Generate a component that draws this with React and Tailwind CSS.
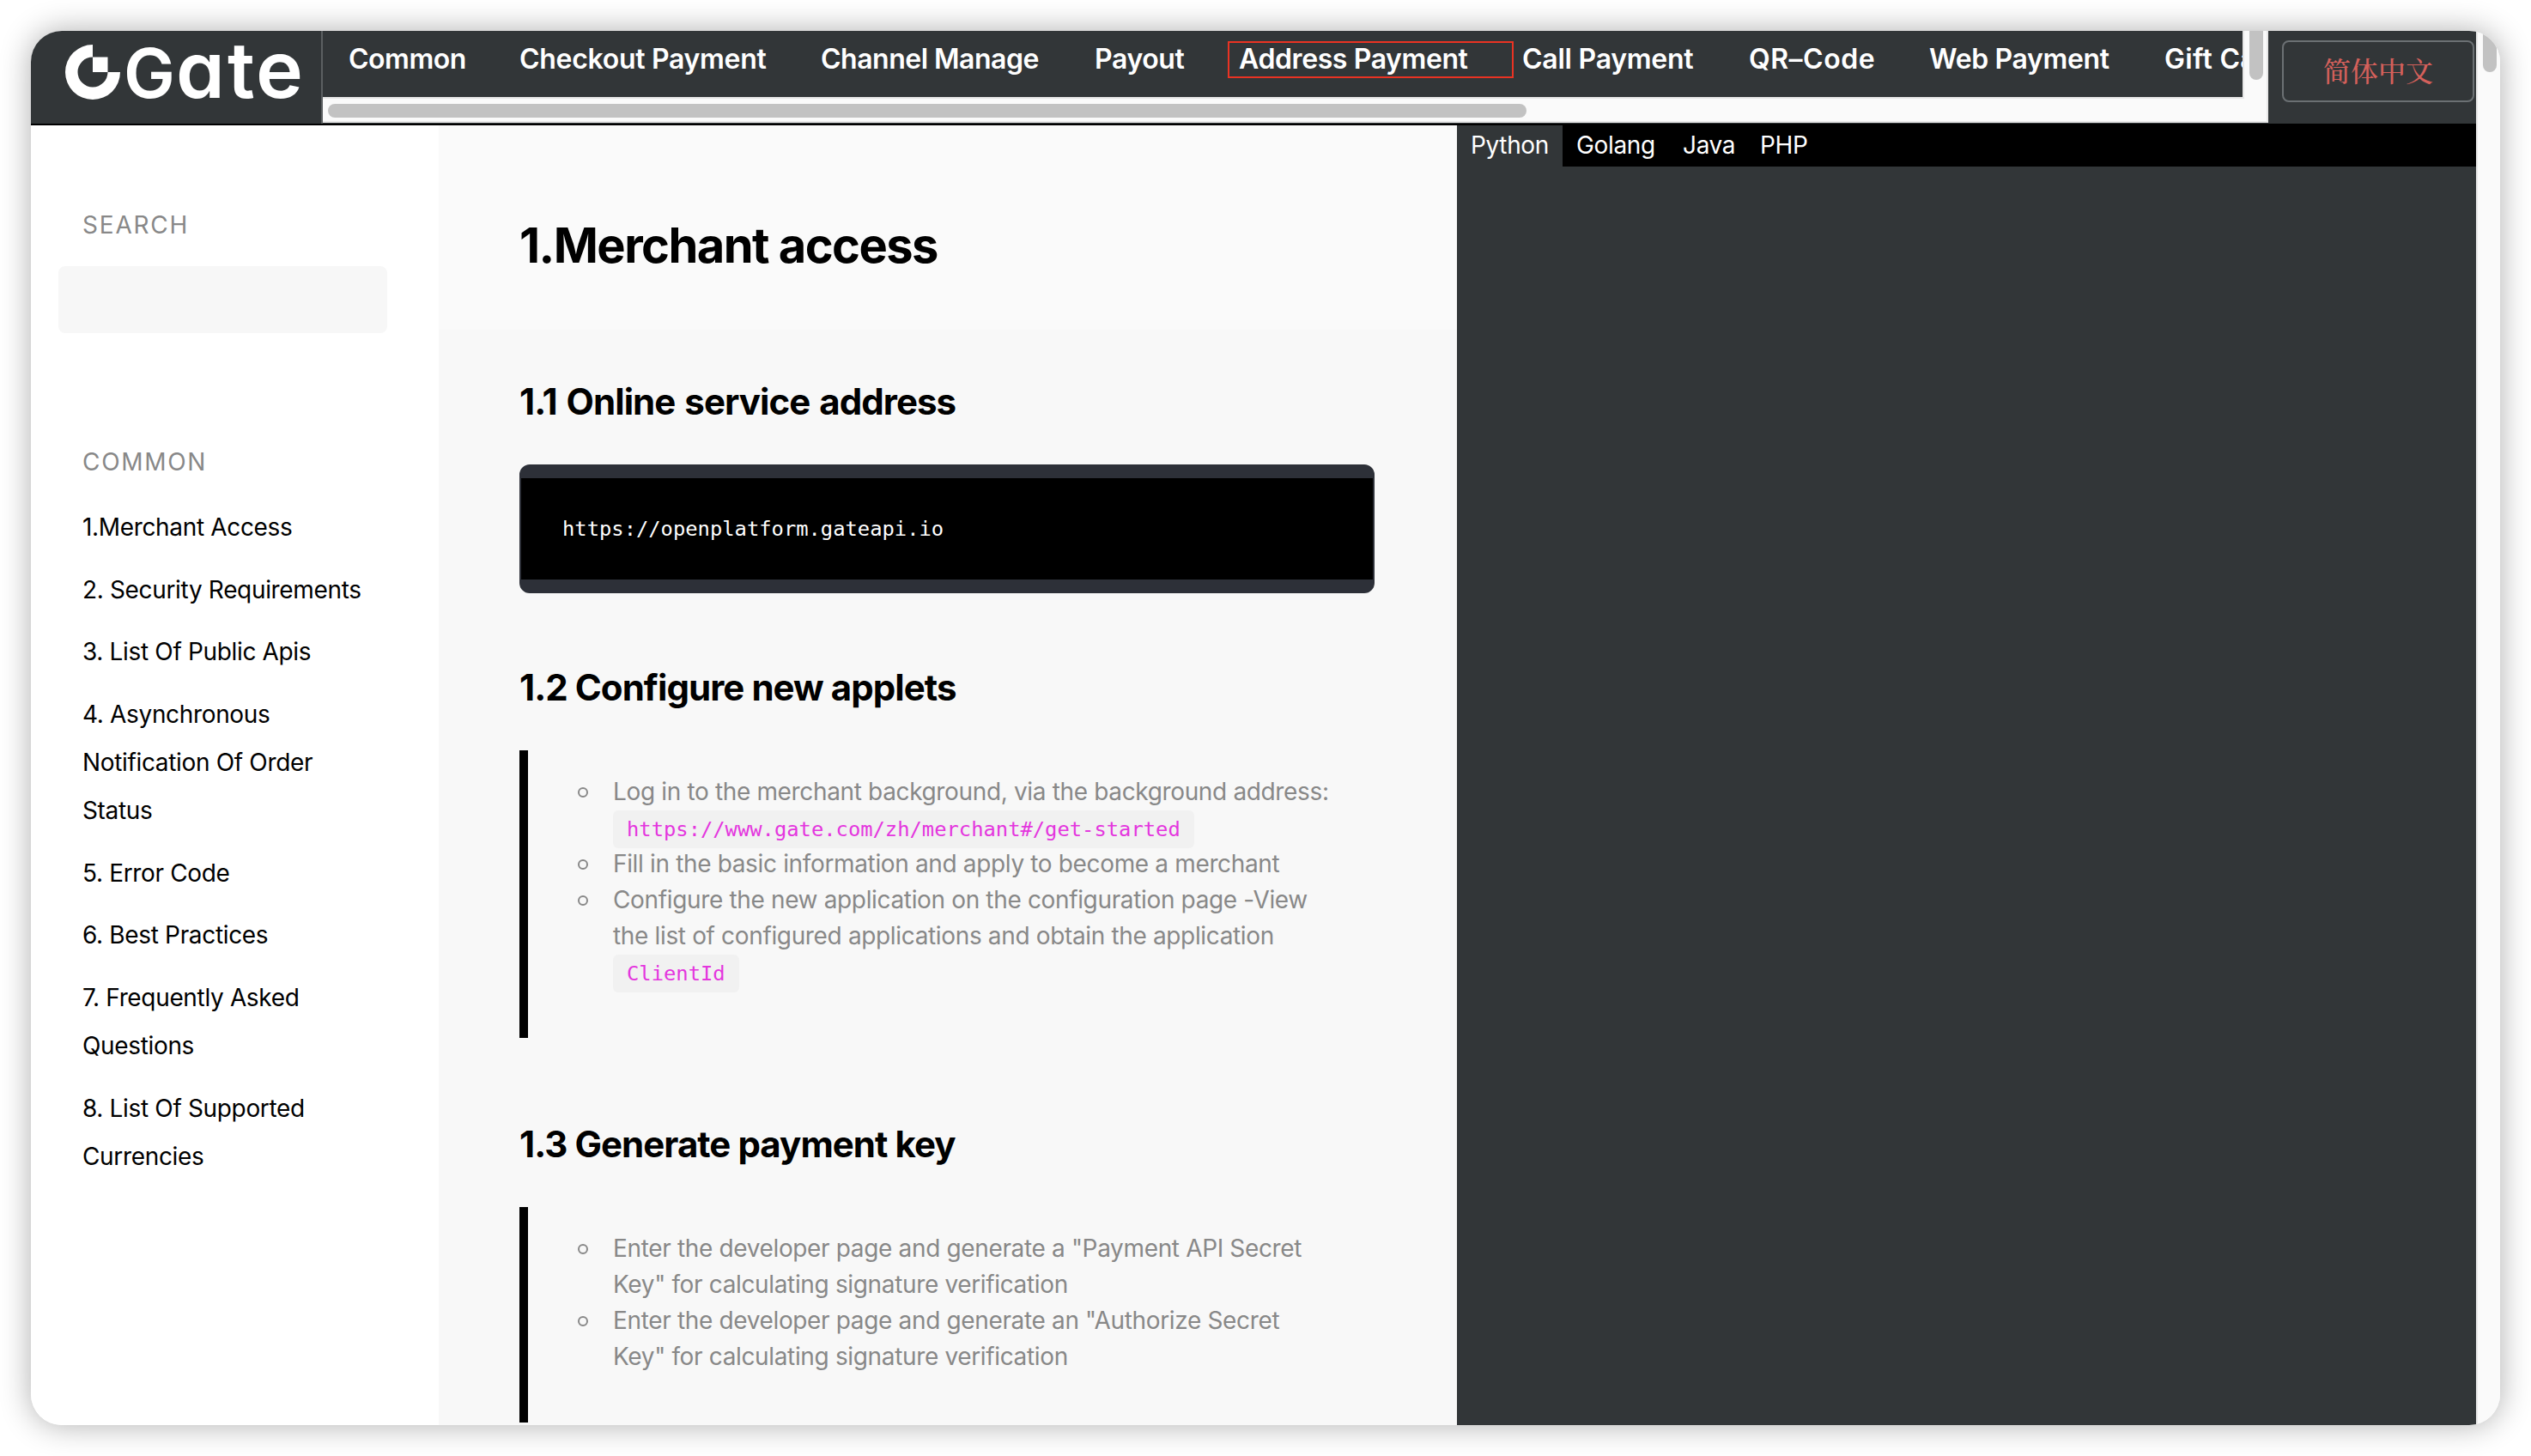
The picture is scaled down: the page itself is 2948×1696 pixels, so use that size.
import React, { useState } from "react";
import clsx from "clsx";

const NAV_ITEMS = [
  { label: "Common", className: "w-[199px] tracking-[-0.5px]" },
  { label: "Checkout Payment", className: "w-[351px] tracking-[-0.3px]" },
  { label: "Channel Manage", className: "w-[319px] tracking-[-0.5px]" },
  { label: "Payout", className: "w-[168px] tracking-[-0.4px]" },
  { label: "Address Payment", className: "w-[330px] tracking-[-0.4px]", marked: true },
  { label: "Call Payment", className: "w-[264px] tracking-[-0.25px]" },
  { label: "QR–Code", className: "w-[210px] tracking-[0.5px]" },
  { label: "Web Payment", className: "w-[274px] tracking-[-0.35px]" },
  { label: "Gift Card", className: "w-[200px] tracking-[0.3px]" },
];

const TOC = [
  "1.Merchant Access",
  "2. Security Requirements",
  "3. List Of Public Apis",
  "4. Asynchronous Notification Of Order Status",
  "5. Error Code",
  "6. Best Practices",
  "7. Frequently Asked Questions",
  "8. List Of Supported Currencies",
];

const LANGUAGES = [
  { label: "Python", width: "w-[123px]" },
  { label: "Golang", width: "w-[124px]" },
  { label: "Java", width: "w-[90px]" },
  { label: "PHP", width: "w-[87px]" },
];

const Logo = () => (
  <div className="w-[340px] shrink-0 border-r-2 border-[#5b5f61] pl-10 pt-4 flex items-start">
    <svg viewBox="0 0 64 64" className="w-16 h-16 shrink-0" fill="#fff">
      <path d="M32 0A32 32 0 1 0 64 32H49.5A17.5 17.5 0 1 1 32 14.5Z" />
      <path d="M32 14.5H49.5V32H32Z" />
    </svg>
    <div className="-mt-1 flex items-baseline h-16 leading-[64px] text-white font-semibold pl-1">
      <span className="text-[80px] w-[61px]">G</span>
      <span className="text-[91px] w-[60px] [font-feature-settings:'cv11']">a</span>
      <span className="text-[90px] w-[33px]">t</span>
      <span className="text-[93px]">e</span>
    </div>
  </div>
);

const Nav = () => (
  <div className="w-[2266px] h-[107px] shrink-0 flex flex-col bg-[#fafafa] border-b-2 border-r-2 border-[#e8e8e8]">
    <div className="flex h-[79px]">
      <div className="w-[2238px] shrink-0 flex items-start overflow-hidden bg-[#323638] border-b-2 border-r-2 border-[#e8e8e8] pl-[30px] pt-[9px]">
        {NAV_ITEMS.map((item) => (
          <a
            key={item.label}
            className={clsx(
              "relative shrink-0 text-[32px] leading-[48px] font-semibold text-white whitespace-nowrap",
              item.className
            )}
          >
            {item.label}
            {item.marked && (
              <span className="absolute -left-[13px] top-[3px] w-[333px] h-[43px] border-2 border-[#ea3323]" />
            )}
          </a>
        ))}
      </div>
      <div className="pl-1.5">
        <div className="w-4 h-[57px] rounded-b-full bg-[#c2c2c2]" />
      </div>
    </div>
    <div className="pt-1.5 pl-1.5">
      <div className="w-[1396px] h-4 rounded-full bg-[#c2c2c2]" />
    </div>
  </div>
);

const Sidebar = () => (
  <aside className="w-[475px] shrink-0 bg-white pt-[99px]">
    <h5 className="pl-[60px] text-[28px] leading-[34px] tracking-[1.8px] text-[#888]">SEARCH</h5>
    <div className="mt-[31px] ml-8 w-[383px] h-[78px] rounded-lg bg-[#f7f7f7]" />
    <h5 className="mt-[133px] pl-[60px] text-[28px] leading-[34px] tracking-[1.7px] text-[#888]">COMMON</h5>
    <ul className="mt-[31px] pl-[60px] w-[395px] flex flex-col gap-[16.7px]">
      {TOC.map((entry) => (
        <li key={entry} className="text-[28px] leading-[56px] tracking-[-0.34px] text-black">
          {entry}
        </li>
      ))}
    </ul>
  </aside>
);

const SectionTitle = ({ className, children }) => (
  <h2 className={clsx("text-[42px] leading-[52px] font-bold tracking-[-0.95px] text-black", className)}>
    {children}
  </h2>
);

const Quote = ({ children }) => (
  <blockquote className="mt-[47px] w-[996px] border-l-[10px] border-black pt-[27px] pb-14">
    <ul className="pl-[58px]">{children}</ul>
  </blockquote>
);

const Bullet = ({ children }) => (
  <li className="flex text-[28px] leading-[42px] tracking-[-0.35px] text-[#888]">
    <span className="mt-4 mr-[29px] w-3 h-3 shrink-0 rounded-full border-2 border-[#888]" />
    <div className="whitespace-nowrap">{children}</div>
  </li>
);

const InlineCode = ({ children }) => (
  <code className="px-4 py-2 rounded-md bg-[#f1f1f1] font-['DejaVu_Sans_Mono',monospace] text-[23.8px] leading-none tracking-normal text-[#e436de]">
    {children}
  </code>
);

const Content = () => (
  <main className="w-[1186px] shrink-0 bg-[#f8f8f8]">
    <div className="h-[238px] pt-[106px] pl-[94px] bg-[#fafafa]">
      <h1 className="text-[56px] leading-[68px] font-bold tracking-[-1.55px] text-black">1.Merchant access</h1>
    </div>
    <div className="pl-[94px]">
      <SectionTitle className="pt-[58px] [word-spacing:2px]">1.1 Online service address</SectionTitle>
      <pre className="mt-[47px] w-[996px] h-[150px] flex items-center rounded-xl bg-black border-x-2 border-y-[16px] border-[#2d3038] pt-0.5 pl-12 font-['DejaVu_Sans_Mono',monospace] text-[23.8px] leading-none text-white">
        https://openplatform.gateapi.io
      </pre>

      <SectionTitle className="pt-[84px]">1.2 Configure new applets</SectionTitle>
      <Quote>
        <Bullet>
          Log in to the merchant background, via the background address:
          <br />
          <InlineCode>https://www.gate.com/zh/merchant#/get-started</InlineCode>
        </Bullet>
        <Bullet>Fill in the basic information and apply to become a merchant</Bullet>
        <Bullet>
          Configure the new application on the configuration page -View
          <br />
          the list of configured applications and obtain the application
          <br />
          <InlineCode>ClientId</InlineCode>
        </Bullet>
      </Quote>

      <SectionTitle className="pt-[98px]">1.3 Generate payment key</SectionTitle>
      <Quote>
        <Bullet>
          Enter the developer page and generate a "Payment API Secret
          <br />
          Key" for calculating signature verification
        </Bullet>
        <Bullet>
          Enter the developer page and generate an "Authorize Secret
          <br />
          Key" for calculating signature verification
        </Bullet>
      </Quote>
    </div>
  </main>
);

const CodePanel = () => {
  const [active, setActive] = useState("Python");

  return (
    <section className="flex-1 bg-[#323638]">
      <div className="flex h-12 bg-black">
        {LANGUAGES.map(({ label, width }) => (
          <button
            key={label}
            onClick={() => setActive(label)}
            className={clsx(
              "h-full shrink-0 pl-4 pb-0.5 text-left text-[28px] tracking-[-0.35px] text-white",
              width,
              active === label && "bg-[#323638]"
            )}
          >
            {label}
          </button>
        ))}
      </div>
    </section>
  );
};

function App() {
  return (
    <div className="w-[2948px] h-[1696px] p-9 bg-white overflow-hidden font-['Inter',sans-serif]">
      <div className="w-full h-full flex rounded-[36px] overflow-hidden shadow-[0_0_36px_rgba(0,0,0,0.32)]">
        <div className="w-[2848px] h-full shrink-0 flex flex-col overflow-hidden">
          {/* Header */}
          <header className="h-[110px] shrink-0 flex bg-[#323638] border-b-2 border-black">
            <Logo />
            <Nav />
            <div className="pl-4 pt-[11px]">
              <button className="w-[224px] h-[72px] pb-1 rounded-lg border-2 border-[#6b7073] text-[32px] leading-[48px] font-medium text-[#d4605b] font-['Noto_Serif_CJK_SC','Noto_Sans_CJK_SC',serif]">
                简体中文
              </button>
            </div>
          </header>

          {/* Body */}
          <div className="flex flex-1 min-h-0">
            <Sidebar />
            <Content />
            <CodePanel />
          </div>
        </div>

        {/* Page scrollbar */}
        <div className="w-7 h-full bg-[#fafafa] border-l-2 border-[#e8e8e8] pl-1.5">
          <div className="w-4 h-12 rounded-b-full bg-[#c2c2c2]" />
        </div>
      </div>
    </div>
  );
}

export default App;
